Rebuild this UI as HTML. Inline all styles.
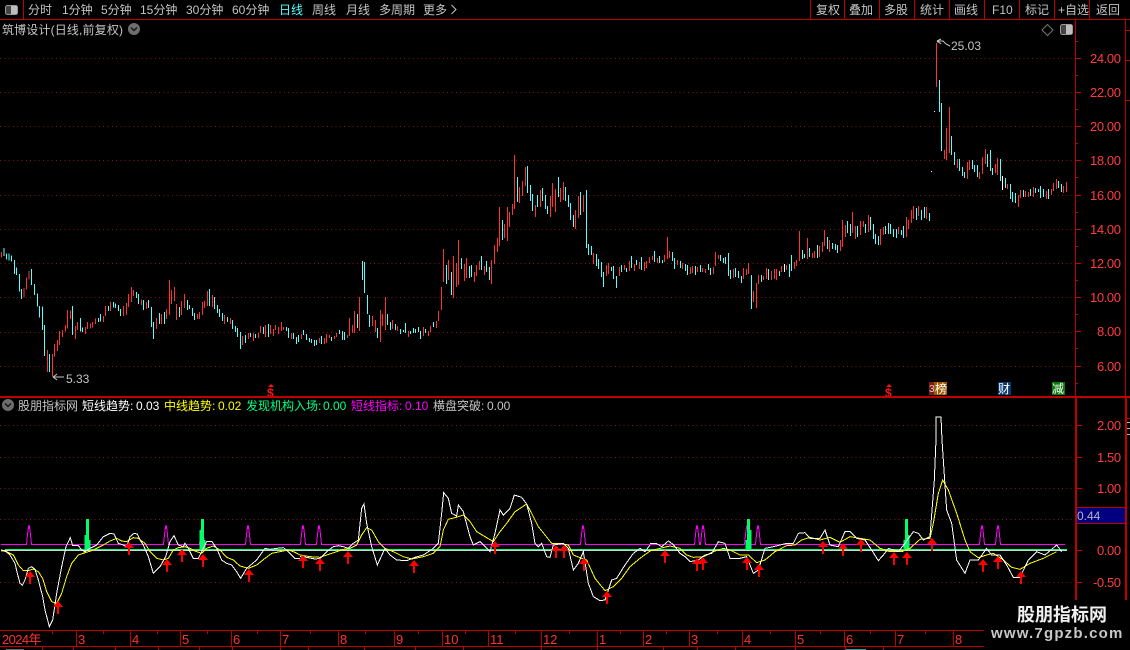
<!DOCTYPE html>
<html><head><meta charset="utf-8"><style>
html,body{margin:0;padding:0;background:#000;width:1130px;height:650px;overflow:hidden}
svg{display:block}
text{font-family:"Liberation Sans","WenQuanYi Zen Hei","Noto Sans CJK SC",sans-serif;font-size:12px;fill:#c4c4c4}
.r{stroke:#ff3232;fill:none;stroke-width:3}
.c{stroke:#54ffff;fill:none;stroke-width:3}
.w{stroke:#fff;fill:none;stroke-width:3}
.ax text{fill:#ff3c3c;font-size:13px;letter-spacing:-.4px}
.mo text{fill:#ff3232;font-size:13px}
</style></head><body>
<svg width="1130" height="650" viewBox="0 0 1130 650" xmlns="http://www.w3.org/2000/svg">
<defs><g id="ar"><path d="M0 0L5 6H1V13H-1V6H-5Z" fill="#ff0000"/></g></defs>
<rect width="1130" height="650" fill="#000"/>

<!-- grid -->
<g stroke="#8a1010" stroke-width="1" stroke-dasharray="1 3.3" shape-rendering="crispEdges">
<path d="M0 58.5H1075M0 92.5H1075M0 126.5H1075M0 160.5H1075M0 195.5H1075M0 229.5H1075M0 263.5H1075M0 297.5H1075M0 332.5H1075M0 366.5H1075"/>
<path d="M0 425.5H1075M0 457.5H1075M0 488.5H1075M0 519.5H1075M0 582.5H1075"/>
</g>

<!-- candles -->
<g shape-rendering="crispEdges">
<g transform="translate(0,240) scale(.33333)">
<path class="r" d="M4 36V52M72 144V172M80 113V148M87 93V118M142 330V396M157 342V410M163 312V350M172 300V333M178 273V315M187 270V291M196 255V274M202 210V265M211 212V237M226 258V297M232 246V270M256 261V282M262 246V267M271 250V265M277 246V262M286 236V252M310 228V246M316 198V228M331 186V213M370 198V228M379 189V225M385 162V201M394 141V186M400 150V168M424 178V195M439 186V207M469 234V267M484 222V252M499 207V237M508 120V225M514 150V192M523 141V183M529 192V240M544 183V225M553 162V204M592 222V237M598 216V237M607 186V225M613 183V204M622 153V198M637 165V201M673 225V252M691 234V252M727 288V315M745 279V297M760 279V303M775 279V294M781 258V279M796 255V291M811 255V282M820 267V288M826 255V270M835 261V282"/>
<path class="c" d="M12 24V48M19 40V58M27 40V62M34 47V65M43 60V102M49 82V105M58 102V155M64 147V177M94 87V135M103 132V165M112 160V200M118 198V232M127 200V270M133 255V348M148 342V396M217 198V285M241 234V275M247 262V276M295 234V246M301 222V244M325 198V213M340 186V202M346 190V204M355 195V213M361 207V228M409 156V174M415 162V192M430 180V210M445 180V204M454 201V261M460 246V297M478 219V252M493 216V252M538 201V231M562 180V210M568 195V207M577 204V228M583 219V240M628 147V198M643 171V207M652 195V219M658 207V231M667 219V243M682 231V246M697 240V267M706 258V276M712 264V291M721 276V327M736 285V309M751 279V291M766 282V294M790 261V282M805 252V291"/>
</g>
<g transform="translate(280,140) scale(.33333)">
<path class="r" d="M5 546V573M11 561V570M35 579V597M65 582V597M119 594V609M134 594V612M140 582V609M149 585V594M164 588V597M170 579V591M203 585V594M209 534V588M218 555V579M224 513V579M239 471V573M278 528V558M287 540V576M302 510V606M308 522V558M317 471V570M338 540V567M353 558V573M386 573V591M431 561V588M446 573V588M452 558V576M470 543V564M476 513V543M485 441V510M491 327V426M506 360V420M521 348V474M530 369V441M536 300V435M554 372V423M560 354V414M584 396V426M590 375V408M599 363V390M614 378V405M635 360V432M644 315V372M653 294V336M659 201V318M674 252V294M683 201V303M689 216V261M698 192V225M704 45V207M719 141V189M728 123V168M737 81V138M767 195V231M782 150V201M812 168V231M818 129V201M827 147V216M842 144V186M851 126V180M887 210V267M896 168V234M911 165V216M941 339V372"/>
<path class="c" d="M20 561V573M26 564V594M41 579V597M50 591V612M56 585V606M71 570V585M80 582V600M89 594V606M95 597V609M104 600V618M110 600V615M125 588V612M155 591V603M179 570V582M188 573V600M194 576V600M233 522V564M248 363V420M254 366V459M263 465V522M269 525V561M293 564V594M323 522V555M332 546V570M347 552V570M362 567V582M371 570V576M377 549V579M392 573V582M401 564V579M407 567V579M416 561V576M422 573V597M437 567V579M461 546V561M500 375V432M515 396V465M545 354V387M569 378V414M575 375V411M605 348V390M620 363V396M629 381V420M668 240V300M713 111V186M743 78V159M752 135V183M758 162V213M773 165V201M788 144V183M797 165V207M803 198V222M836 111V171M857 141V183M866 165V201M872 189V240M881 225V261M902 156V225M920 150V324M926 312V345M935 318V345M950 342V378M956 357V387"/>
</g>
<g transform="translate(590,190) scale(.33333)">
<path class="r" d="M49 225V258M55 219V252M88 231V258M103 225V240M118 213V243M133 222V243M148 216V237M163 216V243M169 213V234M178 201V219M187 198V210M202 204V219M223 195V216M232 141V207M238 183V204M262 210V225M277 219V237M301 231V252M307 228V249M322 231V246M337 234V246M346 237V249M370 231V252M376 186V228M385 195V207M430 237V264M460 234V267M469 237V255M475 219V252M490 303V336M499 279V354M505 255V282M520 258V270M529 234V267M544 243V270M553 237V267M559 237V270M574 228V246M589 225V240M613 216V237M619 210V228M628 123V213M652 144V207M667 189V204M673 183V204M688 168V201M697 156V186M703 120V168M718 150V186M751 150V183M757 90V171M766 105V141M787 66V129M796 108V147M811 93V135M820 93V111M835 75V126M871 117V165M880 111V135M925 111V132M949 81V141M955 90V117M964 60V99M970 48V87M985 48V78M1009 51V87"/>
<path class="c" d="M34 216V261M40 246V291M64 231V243M70 228V267M79 258V294M94 225V246M109 234V246M124 198V234M139 210V225M154 201V240M193 183V216M208 198V219M217 210V219M247 186V213M253 204V237M271 213V234M286 222V243M292 225V255M316 228V255M331 225V246M355 222V240M361 234V255M391 195V213M400 204V219M406 201V222M415 189V258M421 240V267M436 234V261M445 243V264M454 258V279M484 255V357M514 255V276M535 237V270M568 243V258M598 222V261M604 195V243M637 180V207M643 192V204M658 174V201M682 165V204M712 141V177M727 159V177M736 162V180M742 165V189M772 93V129M781 102V138M802 108V141M826 102V129M841 81V120M850 102V147M856 132V162M865 138V165M886 108V132M895 99V132M901 102V132M910 117V141M919 117V144M934 120V135M940 108V144M979 54V90M994 60V90M1003 51V84M1018 69V93"/>
<path class="w" d="M583 222V246"/>
</g>
<g transform="translate(920,90) scale(.33333)">
<path class="r" d="M49 -141V-9M73 180V207M79 114V210M88 51V189M112 207V234M142 216V267M148 210V240M178 246V267M187 201V252M196 177V222M226 222V249M232 204V255M262 282V297M295 315V351M301 300V324M316 303V321M325 306V321M340 291V321M379 303V327M394 297V315M400 279V303M409 267V297M430 288V309M439 276V306"/>
<path class="c" d="M58 -30V66M64 39V183M94 138V195M103 186V225M118 207V243M127 231V258M133 246V264M157 210V237M163 225V246M172 225V261M202 192V231M211 180V243M217 234V255M241 207V273M256 264V294M271 282V327M277 306V336M286 309V339M310 300V321M331 297V318M346 294V309M355 297V306M361 288V324M370 297V321M385 297V327M415 273V294M424 282V306"/>
<path class="w" d="M247 258V300"/>
</g>
<rect x="934" y="111" width="1" height="1" fill="#fff"/><rect x="931" y="171" width="1" height="1" fill="#fff"/>
</g>

<!-- price markers -->
<path d="M937 42L940 41H943L946 44L950 46M937 41L941 39M937 41L941 44" stroke="#c8c8c8" fill="none" stroke-width="1"/>
<text x="951" y="50">25.03</text>
<path d="M53 377H64M53 377L57 374M53 377L57 380" stroke="#c8c8c8" fill="none" stroke-width="1"/>
<text x="66" y="383">5.33</text>

<!-- markers on bottom of price panel -->
<path d="M271 384L274 387H268Z" fill="#ff1010"/>
<text x="267" y="397" style="fill:#ff1010;font-size:12px;font-weight:bold">$</text>
<path d="M889 384L892 387H886Z" fill="#ff1010"/>
<text x="885" y="397" style="fill:#ff1010;font-size:12px;font-weight:bold">$</text>
<rect x="929" y="382" width="6" height="13" fill="#7a1a1a"/>
<text x="929" y="392" style="fill:#e8c8c8;font-size:10px">3</text>
<rect x="934" y="382" width="13" height="13" fill="#a05a00"/>
<text x="935" y="393" style="fill:#fff">榜</text>
<rect x="998" y="382" width="13" height="13" fill="#0a3a70"/>
<text x="998" y="393" style="fill:#fff">财</text>
<rect x="1052" y="382" width="13" height="13" fill="#0a7a0a"/>
<text x="1052" y="393" style="fill:#fff">减</text>

<!-- indicator -->
<g fill="none" shape-rendering="crispEdges">
<g stroke="#ff00ff" stroke-width="1">
<path d="M1 544.5H26.5L28 530L29 525L30 530L31.5 544.5H163.5L165 530L166 525L167 530L168.5 544.5H199.5L201 530L202 525L203 530L204.5 544.5H245.5L247 530L248 525L249 530L250.5 544.5H300.5L302 530L303 525L304 530L305.5 544.5H316.5L318 530L319 525L320 530L321.5 544.5H580.5L582 530L583 525L584 530L585.5 544.5H694.5L696 530L697 525L698 530L699.5 544.5H700.5L702 530L703 525L704 530L705.5 544.5H744.5L746 530L747 525L748 530L749.5 544.5H755.5L757 530L758 525L759 530L760.5 544.5H979.5L981 530L982 525L983 530L984.5 544.5H995.5L997 530L998 525L999 530L1000.5 544.5H1065"/>
</g>
<rect x="5" y="550" width="1062" height="1" fill="#c8dcc8" stroke="none"/>
<rect x="5" y="549" width="1062" height="1" fill="#00ff80" stroke="none"/>
<g fill="#00ff66" stroke="none">
<rect x="86" y="519" width="3" height="31"/><rect x="84.5" y="535" width="1.5" height="15"/><rect x="89" y="540" width="1.5" height="10"/>
<rect x="201" y="519" width="3" height="31"/><rect x="199.5" y="530" width="1.5" height="20"/><rect x="204" y="540" width="1.5" height="10"/>
<rect x="747" y="519" width="3" height="31"/><rect x="745.5" y="540" width="1.5" height="10"/><rect x="750" y="530" width="1.5" height="20"/>
<rect x="905" y="519" width="3" height="31"/><rect x="903.5" y="540" width="1.5" height="10"/><rect x="908" y="535" width="1.5" height="15"/>
</g>
<g transform="translate(0,480) scale(.33333)" stroke="#ffff00" stroke-width="3">
<path d="M3 212L20 215L40 225L55 255L70 272L85 272L100 267L115 275L128 295L140 335L155 365L170 370L185 340L200 290L215 250L235 225L255 218L275 212L290 205L310 195L330 183L350 175L365 183L380 185L400 173L415 175L435 190L450 215L470 235L490 240L505 235L520 210L535 203L555 200L570 205L590 215L605 220L620 205L640 198L660 210L680 232L700 240L720 258L745 265L770 255L795 235L815 220L840 215L865 210L885 217L900 225"/>
</g>
<g transform="translate(300,480) scale(.33333)" stroke="#ffff00" stroke-width="3">
<path d="M0 225L30 230L60 232L80 225L110 215L130 208L150 205L170 195L185 165L200 143L215 150L235 185L255 205L280 215L310 230L335 237L370 230L400 220L420 200L430 150L445 118L465 113L490 105L510 125L530 155L555 170L580 185L600 155L620 130L645 95L680 72L695 100L715 140L735 165L755 190L780 190L805 195L820 225L845 235L860 240L885 295L915 332L940 320L965 295L990 260L1020 235L1050 213"/>
</g>
<g transform="translate(650,480) scale(.33333)" stroke="#ffff00" stroke-width="3">
<path d="M0 213L30 205L60 198L90 205L110 225L130 232L160 230L190 215L220 205L240 210L270 225L295 225L320 248L345 240L375 215L410 197L435 195L455 180L480 172L510 180L540 172L570 187L600 170L630 175L660 180L690 205L720 215L755 215L780 205L810 178L840 175L850 130L865 40L878 0L895 30L920 100L945 180L960 215L985 233L1010 225L1030 220L1060 240L1085 262L1110 268L1140 250L1180 235L1220 215"/>
</g>
<g transform="translate(0,480) scale(.33333)" stroke="#fff" stroke-width="3">
<path d="M3 210L15 212L30 225L45 250L52 280L60 310L67 316L75 300L85 265L95 260L105 268L115 300L128 350L135 390L148 440L158 420L170 340L185 260L198 200L211 173L218 197L235 197L245 210L255 215L270 205L290 195L310 170L330 160L342 162L355 190L370 195L380 200L390 170L402 160L412 162L420 180L430 195L445 230L460 280L480 260L497 230L510 185L522 167L535 195L550 200L555 190L565 205L580 235L595 235L605 215L620 185L636 185L650 205L665 240L680 250L695 255L710 275L722 295L740 265L770 240L795 205L810 208L830 205L850 203L865 215L885 235L900 235"/>
</g>
<g transform="translate(300,480) scale(.33333)" stroke="#fff" stroke-width="3">
<path d="M0 230L20 232L45 237L60 235L80 215L100 200L115 197L130 200L145 205L160 190L175 180L185 85L192 72L200 130L215 200L232 255L255 205L270 225L290 240L320 242L345 232L370 225L400 205L415 190L425 100L431 38L445 55L455 100L470 108L475 75L490 95L510 170L520 195L540 185L570 215L585 160L600 90L610 105L630 85L643 45L665 52L680 72L695 130L705 190L715 200L725 190L740 230L750 232L760 195L790 190L805 205L820 270L835 250L850 215L865 310L880 350L900 362L915 360L935 300L950 295L975 255L1000 220L1020 205L1035 215L1050 195"/>
</g>
<g transform="translate(650,480) scale(.33333)" stroke="#fff" stroke-width="3">
<path d="M0 190L18 190L35 200L55 183L65 190L75 200L90 220L105 230L120 245L145 240L165 225L185 220L205 185L225 190L240 235L270 235L290 230L310 280L325 270L345 205L370 200L390 195L410 190L430 190L445 160L465 158L480 175L510 175L525 150L540 195L565 200L585 155L600 155L620 175L645 180L665 210L685 242L700 225L715 205L745 215L765 190L790 155L805 160L820 180L840 170L853 0L858 -120L858 -189L873 -189L876 -120L882 -30L890 90L905 130L920 240L945 280L960 240L985 240L1010 205L1025 225L1050 225L1070 255L1090 292L1110 292L1135 240L1160 215L1185 225L1220 195L1235 215"/>
</g>
</g>

<!-- arrows -->
<use href="#ar" x="30" y="571"/><use href="#ar" x="58" y="601"/><use href="#ar" x="129" y="542"/><use href="#ar" x="167" y="559"/><use href="#ar" x="182" y="549"/><use href="#ar" x="203" y="554"/><use href="#ar" x="249" y="569"/>
<use href="#ar" x="303" y="555"/><use href="#ar" x="320" y="558"/><use href="#ar" x="348" y="551"/><use href="#ar" x="414" y="560"/><use href="#ar" x="495" y="541"/><use href="#ar" x="556" y="545"/><use href="#ar" x="564" y="545"/><use href="#ar" x="584" y="558"/><use href="#ar" x="607" y="591"/>
<use href="#ar" x="665" y="550"/><use href="#ar" x="697" y="558"/><use href="#ar" x="703" y="557"/><use href="#ar" x="747" y="557"/><use href="#ar" x="759" y="564"/><use href="#ar" x="823" y="541"/><use href="#ar" x="843" y="543"/><use href="#ar" x="861" y="539"/><use href="#ar" x="894" y="552"/><use href="#ar" x="907" y="552"/><use href="#ar" x="932" y="538"/><use href="#ar" x="983" y="559"/><use href="#ar" x="998" y="556"/><use href="#ar" x="1021" y="571"/>

<!-- frame lines -->
<g fill="#c00000" shape-rendering="crispEdges">
<rect x="0" y="19" width="1130" height="1"/>
<rect x="0" y="396" width="1130" height="2"/>
<rect x="23" y="0" width="1" height="19"/>
<rect x="810" y="0" width="1" height="19"/><rect x="844" y="0" width="1" height="19"/><rect x="879" y="0" width="1" height="19"/><rect x="914" y="0" width="1" height="19"/><rect x="949" y="0" width="1" height="19"/><rect x="984" y="0" width="1" height="19"/><rect x="1019" y="0" width="1" height="19"/><rect x="1054" y="0" width="1" height="19"/><rect x="1089" y="0" width="1" height="19"/>
<rect x="1075" y="19" width="1" height="377"/>
<rect x="1075" y="397" width="2" height="253"/>
<rect x="1125" y="19" width="1" height="377"/>
<rect x="1125" y="397" width="2" height="253"/>
<rect x="1126" y="418" width="4" height="1"/>
<rect x="1077" y="507" width="48" height="1"/><rect x="1077" y="523" width="48" height="1"/>
<rect x="1075" y="58" width="6" height="1"/><rect x="1075" y="92" width="6" height="1"/><rect x="1075" y="126" width="6" height="1"/><rect x="1075" y="160" width="6" height="1"/><rect x="1075" y="195" width="6" height="1"/><rect x="1075" y="229" width="6" height="1"/><rect x="1075" y="263" width="6" height="1"/><rect x="1075" y="297" width="6" height="1"/><rect x="1075" y="331" width="6" height="1"/><rect x="1075" y="366" width="6" height="1"/>
<rect x="1075" y="41" width="3" height="1"/><rect x="1075" y="75" width="3" height="1"/><rect x="1075" y="109" width="3" height="1"/><rect x="1075" y="143" width="3" height="1"/><rect x="1075" y="177" width="3" height="1"/><rect x="1075" y="212" width="3" height="1"/><rect x="1075" y="246" width="3" height="1"/><rect x="1075" y="280" width="3" height="1"/><rect x="1075" y="314" width="3" height="1"/><rect x="1075" y="348" width="3" height="1"/><rect x="1075" y="383" width="3" height="1"/>
<rect x="1077" y="425" width="5" height="1"/><rect x="1077" y="457" width="5" height="1"/><rect x="1077" y="488" width="5" height="1"/><rect x="1077" y="550" width="5" height="1"/><rect x="1077" y="582" width="5" height="1"/>
<rect x="1126" y="30" width="4" height="1"/><rect x="1126" y="60" width="4" height="1"/><rect x="1126" y="100" width="4" height="1"/>
</g>
<g fill="#b0b0b0" shape-rendering="crispEdges">
<rect x="1127" y="422" width="3" height="1"/><rect x="1127" y="428" width="3" height="1"/><rect x="1127" y="434" width="3" height="1"/>
</g>
<rect x="1077" y="508" width="48" height="15" fill="#000080"/>
<text x="1077" y="520" style="fill:#b4b4c8;font-size:12px">0.44</text>

<!-- axis labels -->
<g class="ax">
<text x="1090" y="63">24.00</text><text x="1090" y="97">22.00</text><text x="1090" y="131">20.00</text><text x="1090" y="165">18.00</text><text x="1090" y="200">16.00</text><text x="1090" y="234">14.00</text><text x="1090" y="268">12.00</text><text x="1090" y="302">10.00</text><text x="1097" y="336">8.00</text><text x="1097" y="371">6.00</text>
<text x="1097" y="430">2.00</text><text x="1097" y="462">1.50</text><text x="1097" y="493">1.00</text><text x="1097" y="555">0.00</text><text x="1093" y="587">-0.50</text>
</g>

<!-- toolbar -->
<rect x="5.5" y="5.5" width="12" height="9" rx="2" fill="#444" stroke="#9a9a9a"/><rect x="11" y="6" width="6" height="8" fill="#bdbdbd"/>
<text x="28" y="14">分时</text><text x="62" y="14">1分钟</text><text x="101" y="14">5分钟</text><text x="140" y="14">15分钟</text><text x="186" y="14">30分钟</text><text x="232" y="14">60分钟</text>
<text x="279" y="14" style="fill:#54ffff">日线</text>
<text x="312" y="14">周线</text><text x="346" y="14">月线</text><text x="379" y="14">多周期</text><text x="423" y="14">更多</text>
<path d="M451.5 5L456 9.5L451.5 14" stroke="#c4c4c4" fill="none"/>
<text x="816" y="14">复权</text><text x="849" y="14">叠加</text><text x="884" y="14">多股</text><text x="920" y="14">统计</text><text x="954" y="14">画线</text><text x="992" y="14">F10</text><text x="1025" y="14">标记</text><text x="1058" y="14">+自选</text><text x="1096" y="14">返回</text>

<!-- title -->
<text x="2" y="34" style="letter-spacing:.15px">筑博设计(日线,前复权)</text>
<circle cx="134" cy="29" r="6" fill="#6e6e6e"/><path d="M131 27.5L134 30.5L137 27.5" stroke="#111" stroke-width="1.4" fill="none"/>
<path d="M1047.5 24.5L1053 30L1047.5 35.5L1042 30Z" stroke="#777" fill="none"/>
<rect x="1060.5" y="24.5" width="12" height="10" rx="2" fill="#444" stroke="#9a9a9a"/><rect x="1066" y="25" width="6" height="9" fill="#bdbdbd"/>

<!-- lower header -->
<circle cx="8" cy="405" r="6" fill="#6e6e6e"/><path d="M5 403.5L8 406.5L11 403.5" stroke="#111" stroke-width="1.4" fill="none"/>
<text x="18" y="410">股朋指标网</text>
<text x="82" y="410" style="fill:#fff">短线趋势:</text><text x="136" y="410" style="fill:#fff">0.03</text>
<text x="164" y="410" style="fill:#ffff00">中线趋势:</text><text x="218" y="410" style="fill:#ffff00">0.02</text>
<text x="246" y="410" style="fill:#00ff80">发现机构入场:</text><text x="323" y="410" style="fill:#00ff80">0.00</text>
<text x="351" y="410" style="fill:#ff00ff">短线指标:</text><text x="405" y="410" style="fill:#ff00ff">0.10</text>
<text x="433" y="410">横盘突破:</text><text x="487" y="410">0.00</text>

<!-- timeline -->
<g fill="#c00000" shape-rendering="crispEdges">
<rect x="0" y="630" width="984" height="1"/><rect x="0" y="646" width="984" height="1"/>
<rect x="76" y="630" width="1" height="16"/><rect x="130" y="630" width="1" height="16"/><rect x="180" y="630" width="1" height="16"/><rect x="231" y="630" width="1" height="16"/><rect x="280" y="630" width="1" height="16"/><rect x="338" y="630" width="1" height="16"/><rect x="394" y="630" width="1" height="16"/><rect x="442" y="630" width="1" height="16"/><rect x="488" y="630" width="1" height="16"/><rect x="541" y="630" width="1" height="16"/><rect x="597" y="630" width="1" height="16"/><rect x="643" y="630" width="1" height="16"/><rect x="689" y="630" width="1" height="16"/><rect x="742" y="630" width="1" height="16"/><rect x="795" y="630" width="1" height="16"/><rect x="844" y="630" width="1" height="16"/><rect x="895" y="630" width="1" height="16"/><rect x="953" y="630" width="1" height="16"/>
<rect x="52" y="631" width="1" height="3"/><rect x="103" y="631" width="1" height="3"/><rect x="157" y="631" width="1" height="3"/><rect x="207" y="631" width="1" height="3"/><rect x="257" y="631" width="1" height="3"/><rect x="310" y="631" width="1" height="3"/><rect x="365" y="631" width="1" height="3"/><rect x="418" y="631" width="1" height="3"/><rect x="465" y="631" width="1" height="3"/><rect x="515" y="631" width="1" height="3"/><rect x="569" y="631" width="1" height="3"/><rect x="620" y="631" width="1" height="3"/><rect x="666" y="631" width="1" height="3"/><rect x="717" y="631" width="1" height="3"/><rect x="770" y="631" width="1" height="3"/><rect x="820" y="631" width="1" height="3"/><rect x="870" y="631" width="1" height="3"/><rect x="925" y="631" width="1" height="3"/>
<rect x="42" y="647" width="1" height="3"/><rect x="73" y="647" width="1" height="3"/><rect x="115" y="647" width="1" height="3"/><rect x="158" y="647" width="1" height="3"/><rect x="199" y="647" width="1" height="3"/><rect x="232" y="647" width="1" height="3"/><rect x="280" y="647" width="1" height="3"/><rect x="308" y="647" width="1" height="3"/><rect x="364" y="647" width="1" height="3"/><rect x="415" y="647" width="1" height="3"/><rect x="463" y="647" width="1" height="3"/><rect x="541" y="647" width="1" height="3"/><rect x="597" y="647" width="1" height="3"/><rect x="663" y="647" width="1" height="3"/><rect x="697" y="647" width="1" height="3"/><rect x="735" y="647" width="1" height="3"/><rect x="795" y="647" width="1" height="3"/><rect x="845" y="647" width="1" height="3"/><rect x="883" y="647" width="1" height="3"/>
</g>
<rect x="6" y="649" width="18" height="1" fill="#666"/><rect x="846" y="649" width="20" height="1" fill="#3a9a9a"/>
<g class="mo">
<text x="2" y="644" style="letter-spacing:-.6px">2024年</text>
<text x="78" y="644">3</text><text x="132" y="644">4</text><text x="182" y="644">5</text><text x="233" y="644">6</text><text x="282" y="644">7</text><text x="340" y="644">8</text><text x="396" y="644">9</text><text x="444" y="644">10</text><text x="490" y="644">11</text><text x="543" y="644">12</text><text x="599" y="644">1</text><text x="645" y="644">2</text><text x="691" y="644">3</text><text x="744" y="644">4</text><text x="797" y="644">5</text><text x="846" y="644">6</text><text x="897" y="644">7</text><text x="955" y="644">8</text>
</g>

<!-- watermark -->
<rect x="984" y="600" width="146" height="50" fill="#000"/>
<text x="1017" y="621" style="fill:#f0f0f0;font-size:18px;font-weight:bold">股朋指标网</text>
<text x="991" y="638" style="fill:#c8c8c8;font-size:15px;font-weight:bold;letter-spacing:1.2px">www.7gpzb.com</text>
</svg>
</body></html>
